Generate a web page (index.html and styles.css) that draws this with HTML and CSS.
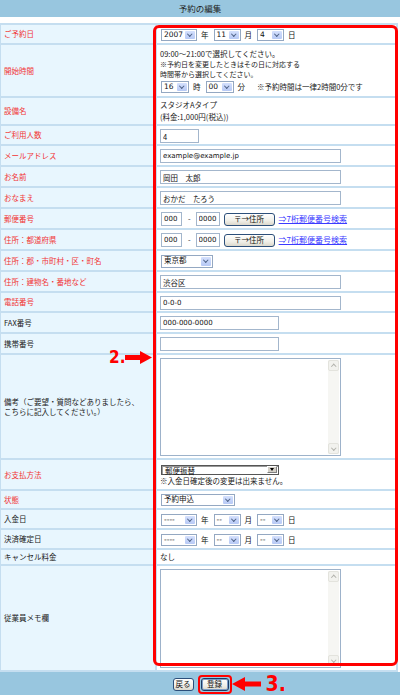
FILE: index.html
```html
<!DOCTYPE html>
<html lang="ja">
<head>
<meta charset="utf-8">
<title>予約の編集</title>
<link rel="stylesheet" href="styles.css">
</head>
<body>
<div class="page">
  <div class="titlebar">予約の編集</div>
  <table class="form">
    <tr class="r-sel">
      <th class="req">ご予約日</th>
      <td><div class="line">
        <span class="sel w-yr"><span class="sv">2007</span><span class="sb"></span></span><span class="u">年</span>
        <span class="sel w-md"><span class="sv">11</span><span class="sb"></span></span><span class="u">月</span>
        <span class="sel w-md"><span class="sv">4</span><span class="sb"></span></span><span class="u">日</span>
      </div></td>
    </tr>
    <tr>
      <th class="req">開始時間</th>
      <td class="time">
        <div class="t1">09:00～21:00で選択してください。</div>
        <div class="note">※予約日を変更したときはその日に対応する</div>
        <div class="note">時間帯から選択してください。</div>
        <div class="line tl">
          <span class="sel w-hr"><span class="sv">16</span><span class="sb"></span></span><span class="u">時</span>
          <span class="sel w-hr"><span class="sv">00</span><span class="sb"></span></span><span class="u">分</span>
          <span class="note2">※予約時間は一律2時間0分です</span>
        </div>
      </td>
    </tr>
    <tr>
      <th class="req">設備名</th>
      <td class="txt2">スタジオAタイプ<br>(料金:1,000円(税込))</td>
    </tr>
    <tr class="h18">
      <th class="req">ご利用人数</th>
      <td><div class="line"><input class="inp w-s" type="text" value="4"></div></td>
    </tr>
    <tr>
      <th class="req">メールアドレス</th>
      <td><div class="line"><input class="inp w-l lat" type="text" value="example@example.jp"></div></td>
    </tr>
    <tr>
      <th class="req">お名前</th>
      <td><div class="line"><input class="inp w-l" type="text" value="岡田　太郎"></div></td>
    </tr>
    <tr>
      <th class="req">おなまえ</th>
      <td><div class="line"><input class="inp w-l" type="text" value="おかだ　たろう"></div></td>
    </tr>
    <tr>
      <th class="req">郵便番号</th>
      <td><div class="line">
        <input class="inp w-z3" type="text" value="000"><span class="dash">-</span><input class="inp w-z4" type="text" value="0000">
        <button class="xbtn zipbtn" type="button">〒→住所</button>
        <a class="lnk" href="#">⇒7桁郵便番号検索</a>
      </div></td>
    </tr>
    <tr>
      <th class="req">住所：都道府県</th>
      <td><div class="line">
        <input class="inp w-z3" type="text" value="000"><span class="dash">-</span><input class="inp w-z4" type="text" value="0000">
        <button class="xbtn zipbtn" type="button">〒→住所</button>
        <a class="lnk" href="#">⇒7桁郵便番号検索</a>
      </div></td>
    </tr>
    <tr>
      <th class="req">住所：郡・市町村・区・町名</th>
      <td><div class="line"><span class="sel w-pref tall"><span class="sv">東京都</span><span class="sb"></span></span></div></td>
    </tr>
    <tr>
      <th class="req">住所：建物名・番地など</th>
      <td><div class="line"><input class="inp w-l" type="text" value="渋谷区"></div></td>
    </tr>
    <tr class="h18">
      <th class="req">電話番号</th>
      <td><div class="line"><input class="inp w-l lat" type="text" value="0-0-0"></div></td>
    </tr>
    <tr>
      <th>FAX番号</th>
      <td><div class="line"><input class="inp w-m lat" type="text" value="000-000-0000"></div></td>
    </tr>
    <tr>
      <th>携帯番号</th>
      <td><div class="line"><input class="inp w-m" type="text" value=""></div></td>
    </tr>
    <tr>
      <th class="multi">備考（ご要望・質問などありましたら、<br>こちらに記入してください。）</th>
      <td class="tacell"><div class="ta"><div class="ta-sb"><span class="sbb up"></span><span class="sbt"></span><span class="sbb dn"></span></div></div></td>
    </tr>
    <tr>
      <th class="req">お支払方法</th>
      <td class="pay">
        <div class="line"><span class="csel"><span class="sv">郵便振替</span><span class="cb"></span></span></div>
        <div class="note3">※入金日確定後の変更は出来ません。</div>
      </td>
    </tr>
    <tr class="r-sel h17">
      <th class="req">状態</th>
      <td><div class="line"><span class="sel w-st"><span class="sv">予約申込</span><span class="sb"></span></span></div></td>
    </tr>
    <tr class="r-sel">
      <th>入金日</th>
      <td><div class="line">
        <span class="sel w-yr"><span class="sv">----</span><span class="sb"></span></span><span class="u">年</span>
        <span class="sel w-md"><span class="sv">--</span><span class="sb"></span></span><span class="u">月</span>
        <span class="sel w-md"><span class="sv">--</span><span class="sb"></span></span><span class="u">日</span>
      </div></td>
    </tr>
    <tr class="r-sel">
      <th>決済確定日</th>
      <td><div class="line">
        <span class="sel w-yr"><span class="sv">----</span><span class="sb"></span></span><span class="u">年</span>
        <span class="sel w-md"><span class="sv">--</span><span class="sb"></span></span><span class="u">月</span>
        <span class="sel w-md"><span class="sv">--</span><span class="sb"></span></span><span class="u">日</span>
      </div></td>
    </tr>
    <tr>
      <th class="tight">キャンセル料金</th>
      <td class="tight">なし</td>
    </tr>
    <tr>
      <th>従業員メモ欄</th>
      <td class="tacell memo"><div class="ta"><div class="ta-sb"><span class="sbb up"></span><span class="sbt"></span><span class="sbb dn"></span></div></div></td>
    </tr>
  </table>
  <div class="footer">
    <div class="btns">
      <button class="xbtn fbtn" type="button">戻る</button>
      <span class="hl">
        <button class="xbtn fbtn def" type="button">登録</button>
        <span class="anno3">
          <svg width="29" height="14" viewBox="0 0 29 14"><polygon points="0,7 13,0 13,4.5 29,4.5 29,9.5 13,9.5 13,14" fill="#f00"/></svg>
          <span class="num">3.</span>
        </span>
      </span>
    </div>
  </div>
  <div class="redbox"></div>
  <div class="anno2">
    <span class="num">2.</span>
    <svg width="27" height="13" viewBox="0 0 27 13"><polygon points="0,4 15,4 15,0 27,6.5 15,13 15,9 0,9" fill="#f00"/></svg>
  </div>
</div>
</body>
</html>
```

FILE: styles.css
```css
html, body {
  margin: 0;
  padding: 0;
  background: #fff;
}
body {
  font-family: "Noto Sans CJK JP", sans-serif;
  font-size: 7.5px;
  color: #222;
}
.page {
  position: relative;
  width: 400px;
  height: 695px;
  overflow: hidden;
}
.titlebar {
  height: 17px;
  line-height: 17px;
  background: #98c6df;
  text-align: center;
  font-size: 8.5px;
  color: #222;
  margin-bottom: 6px;
}
.form {
  border-collapse: separate;
  border-spacing: 2px;
  background: #c5def0;
  width: 399px;
  margin-left: -1px;
}
.form th {
  width: 149px;
  padding: 0 2px 0 3px;
  background: #e8f6fe;
  text-align: left;
  font-weight: normal;
  color: #222;
  line-height: 10px;
  vertical-align: middle;
}
.form th.req { color: #f23434; }
.form td {
  background: #fff;
  padding: 3px 3px 2px;
  line-height: 12px;
  vertical-align: middle;
}
.form tr.h18 td { padding-bottom: 1px; }
.form tr.h17 td { padding-top: 2px; padding-bottom: 2px; }
.form th.tight, .form td.tight {
  padding-top: 1px;
  padding-bottom: 1px;
}
.line {
  display: flex;
  align-items: center;
  height: 14px;
}
.r-sel td .line { height: 13px; }
.u { margin: 0 4px; color: #111; }

/* XP-style select */
.sel {
  display: inline-flex;
  align-items: stretch;
  box-sizing: border-box;
  height: 12px;
  border: 1px solid #94a8c2;
  background: #fff;
  margin-left: 1px;
}
.sel.tall { height: 13px; }
.sel .sv {
  flex: 1;
  padding-left: 2px;
  font-family: "DejaVu Sans", "Noto Sans CJK JP", sans-serif;
  font-size: 7.5px;
  line-height: 10px;
  color: #111;
  white-space: nowrap;
  overflow: hidden;
}
.sel .sb {
  width: 10px;
  margin: 1px;
  background: linear-gradient(#d4e0fd, #b7c9f5);
  border-radius: 1px;
  display: flex;
  align-items: center;
  justify-content: center;
}
.sel .sb::after {
  content: "";
  width: 2.5px;
  height: 2.5px;
  border-right: 1.5px solid #4d6185;
  border-bottom: 1.5px solid #4d6185;
  transform: translateY(-1px) rotate(45deg);
}
.w-yr { width: 36px; }
.w-md { width: 27px; }
.w-hr { width: 28px; }
.w-pref { width: 52px; }
.w-st { width: 74px; }

/* classic select */
.csel {
  display: inline-flex;
  align-items: stretch;
  box-sizing: border-box;
  width: 118px;
  height: 10px;
  margin-left: 1px;
  border: 1px solid #555;
  box-shadow: inset 1px 1px 0 #999;
  background: #fff;
}
.csel .sv {
  flex: 1;
  padding-left: 3px;
  font-size: 7.5px;
  line-height: 9px;
  color: #111;
}
.csel .cb {
  width: 8px;
  margin: 0 1px 1px 0;
  background: #d4d0c8;
  border-top: 1px solid #fff;
  border-left: 1px solid #fff;
  border-right: 1px solid #808080;
  border-bottom: 1px solid #808080;
  display: flex;
  align-items: center;
  justify-content: center;
}
.csel .cb::after {
  content: "";
  border-left: 2.5px solid transparent;
  border-right: 2.5px solid transparent;
  border-top: 3px solid #000;
}

/* text inputs */
.inp {
  box-sizing: border-box;
  height: 14px;
  margin: 0;
  padding: 0 2px;
  border: 1px solid #a3b6cc;
  background: #fff;
  font-family: "Noto Sans CJK JP", sans-serif;
  font-size: 7.5px;
  color: #111;
  outline: none;
}
.inp.lat { font-family: "DejaVu Sans", "Noto Sans CJK JP", sans-serif; font-size: 7px; }
.w-s { width: 39px; }
.w-l { width: 181px; }
.w-m { width: 119px; }
.w-z3 { width: 21px; margin-left: 1px; font-family: "DejaVu Sans", sans-serif; font-size: 7px; }
.w-z4 { width: 24px; font-family: "DejaVu Sans", sans-serif; font-size: 7px; }
.dash { margin: 0 5px 0 6px; }

/* XP buttons */
.xbtn {
  box-sizing: border-box;
  margin: 0;
  padding: 0;
  border: 1px solid #2c4f7a;
  border-radius: 3px;
  background: linear-gradient(#ffffff, #f0efe8 60%, #dcd8cc);
  font-family: "Noto Sans CJK JP", sans-serif;
  font-size: 7.5px;
  line-height: 10px;
  color: #111;
}
.zipbtn {
  width: 51px;
  height: 13px;
  margin-left: 4px;
}
.lnk {
  margin-left: 4px;
  color: #3a3aff;
  text-decoration: underline;
  font-size: 8px;
  white-space: nowrap;
}

/* time cell */
.form td.time { padding-top: 4px; padding-bottom: 2px; }
.time .t1 { line-height: 10px; font-size: 7.5px; }
.time .note { line-height: 10px; font-size: 7px; }
.time .tl { margin-top: 1px; }
.note2 { margin-left: 8px; font-size: 7.5px; white-space: nowrap; }
.form td.txt2 { padding-top: 1px; padding-bottom: 1px; line-height: 12px; }

.form th.multi { line-height: 10px; }

/* textarea */
.form td.tacell { padding: 3px 3px 2px; }
.ta {
  display: flex;
  justify-content: flex-end;
  box-sizing: border-box;
  width: 181px;
  height: 98px;
  border: 1px solid #9db2ca;
  background: #fff;
  padding: 1px;
}
.memo .ta { height: 99px; }
.ta-sb {
  width: 11px;
  display: flex;
  flex-direction: column;
  background: #f6f6f3;
}
.sbb {
  height: 11px;
  box-sizing: border-box;
  border: 1px solid #e3e3dd;
  border-radius: 2px;
  background: #f2f2ee;
  display: flex;
  align-items: center;
  justify-content: center;
}
.sbb::after {
  content: "";
  width: 2.5px;
  height: 2.5px;
  border-right: 1px solid #b2b2ac;
  border-bottom: 1px solid #b2b2ac;
}
.sbb.up::after { transform: translateY(1px) rotate(-135deg); }
.sbb.dn::after { transform: translateY(-1px) rotate(45deg); }
.sbt { flex: 1; }

.form td.pay { padding-top: 4px; padding-bottom: 3px; }
.pay .line { height: 11px; }
.note3 { font-size: 7.5px; line-height: 11px; }

/* footer */
.footer {
  height: 24px;
  background: #98c6df;
  display: flex;
  align-items: center;
  justify-content: center;
}
.btns {
  display: flex;
  align-items: center;
  padding-left: 4px;
}
.fbtn {
  height: 13px;
  padding: 0 2px;
}
.fbtn.def {
  width: 28px;
  border: 1px solid #1c3c64;
  box-shadow: inset 0 0 0 1px #7c9cc6;
}
.hl {
  position: relative;
  display: flex;
  margin-left: 4px;
  padding: 1px;
  border: 2px solid #f00;
  border-radius: 4px;
}
.anno3 {
  position: absolute;
  left: 100%;
  top: 50%;
  margin-left: 2px;
  transform: translateY(-50%);
  display: flex;
  align-items: center;
}
.anno3 .num { margin-left: 5px; font-size: 21px; }
.num {
  font-family: "Liberation Sans Narrow", "DejaVu Sans Condensed", "Liberation Sans", sans-serif;
  font-weight: bold;
  font-size: 19px;
  line-height: 16px;
  color: #f00;
}
.anno2 .num { font-size: 17px; }

.redbox {
  position: absolute;
  left: 153px;
  top: 25px;
  width: 245px;
  height: 641px;
  box-sizing: border-box;
  border: 3px solid #f00;
  border-radius: 6px;
  pointer-events: none;
}
.anno2 {
  position: absolute;
  left: 109px;
  top: 349px;
  display: flex;
  align-items: center;
}
```
